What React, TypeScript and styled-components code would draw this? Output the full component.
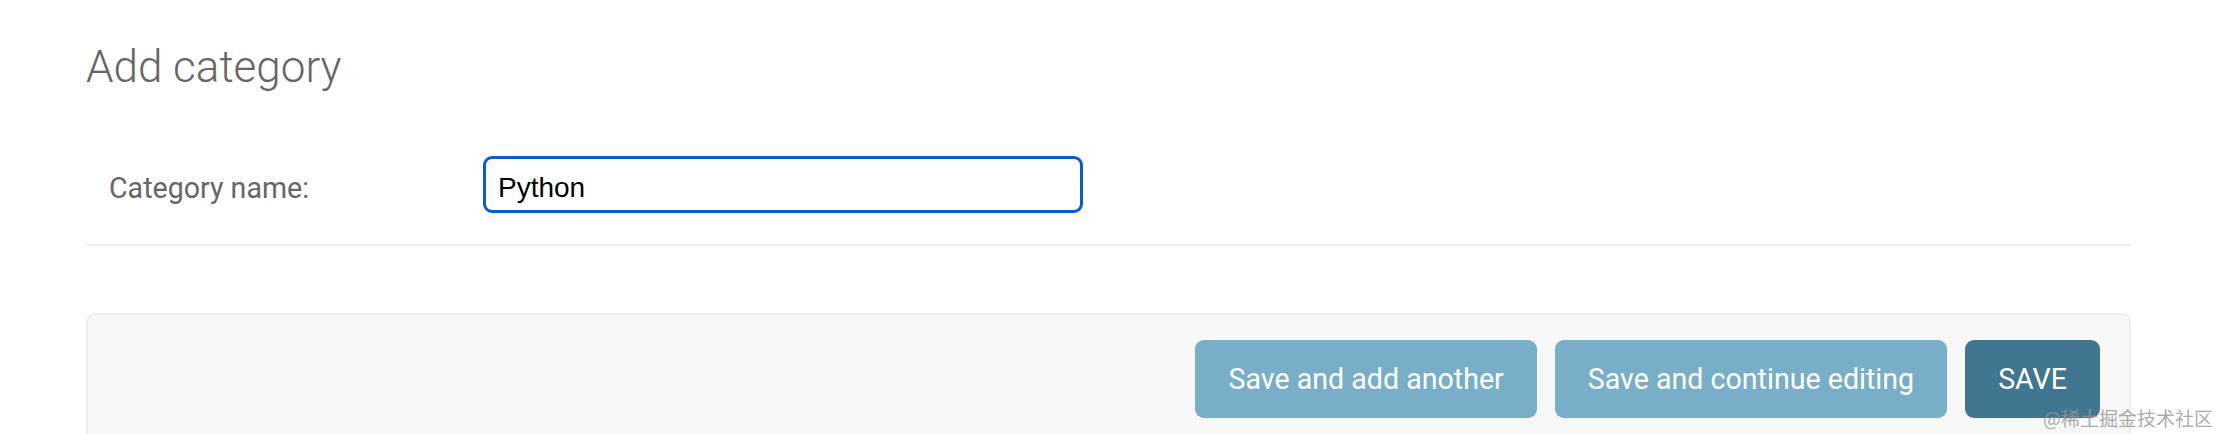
import styled, { createGlobalStyle } from "styled-components";

const GlobalStyle = createGlobalStyle`
  html, body {
    margin: 0;
    padding: 0;
    background: #fff;
  }
  body {
    font-family: Roboto, "Liberation Sans", sans-serif;
    overflow: hidden;
  }
`;

const Page = styled.div`
  position: relative;
  width: 2220px;
  height: 434px;
  overflow: hidden;
`;

const Content = styled.div`
  margin-left: 86px;
  width: 2045px;
  padding-top: 41px;
`;

const Title = styled.h1`
  margin: 0;
  font-family: Roboto, sans-serif;
  font-weight: 300;
  font-size: 44px;
  line-height: 52px;
  color: #666;
`;

const FormRow = styled.div`
  display: flex;
  align-items: flex-start;
  margin-top: 41px;
  padding: 22px 0 31px 23px;
  border-bottom: 2px solid #eee;
`;

const Label = styled.label`
  width: 374px;
  padding-top: 15px;
  font-family: Roboto, sans-serif;
  font-size: 28.6px;
  line-height: 1.2;
  color: #666;
`;

const TextInput = styled.input`
  box-sizing: border-box;
  width: 600px;
  height: 57px;
  padding: 6px 12px 0;
  border: 3px solid #0b5ccb;
  border-radius: 9px;
  outline: none;
  font-family: "Liberation Sans", Arial, sans-serif;
  font-size: 28px;
  color: #000;
  background: #fff;
`;

const SubmitRow = styled.div`
  display: flex;
  justify-content: flex-end;
  gap: 18px;
  margin-top: 67px;
  padding: 25px 29px 26px;
  background: #f8f8f8;
  border: 2px solid #eee;
  border-radius: 9px;
`;

const Button = styled.button<{ $primary?: boolean }>`
  height: 78px;
  padding: 0 33px;
  border: none;
  border-radius: 9px;
  background: ${(p) => (p.$primary ? "#417690" : "#79aec8")};
  color: #fff;
  font-family: Roboto, sans-serif;
  font-size: 28.6px;
  font-weight: 400;
  cursor: pointer;
`;

const Watermark = styled.div`
  position: absolute;
  right: 7px;
  bottom: 5px;
  font-family: "Noto Sans CJK SC", sans-serif;
  font-size: 19px;
  line-height: 22px;
  color: rgba(150, 150, 150, 0.8);
  pointer-events: none;
`;

export default function App() {
  return (
    <Page>
      <GlobalStyle />
      <Content>
        <Title>Add category</Title>
        <FormRow>
          <Label htmlFor="id_name">Category name:</Label>
          <TextInput id="id_name" defaultValue="Python" />
        </FormRow>
        <SubmitRow>
          <Button>Save and add another</Button>
          <Button>Save and continue editing</Button>
          <Button $primary>SAVE</Button>
        </SubmitRow>
      </Content>
      <Watermark>@稀土掘金技术社区</Watermark>
    </Page>
  );
}
